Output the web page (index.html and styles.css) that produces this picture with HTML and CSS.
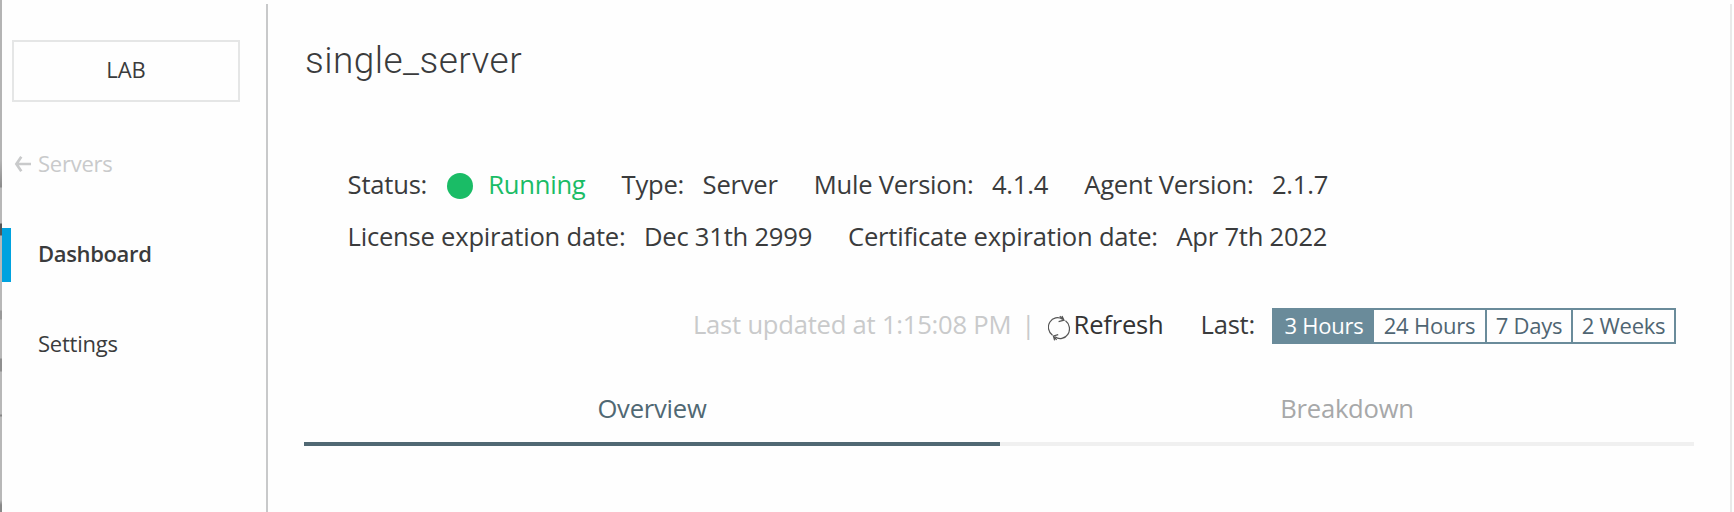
FILE: index.html
```
<!DOCTYPE html>
<html lang="en">
<head>
<meta charset="utf-8">
<title>single_server</title>
<link rel="stylesheet" href="styles.css">
</head>
<body>
<div class="app">
  <div class="edge"></div>
  <aside class="sidebar">
    <div class="env">LAB</div>
    <a class="back">
      <svg class="arrow" width="17" height="16" viewBox="0 0 17 16"><path d="M7.3 0.8 L2.4 8 L7.3 15.2 M2.4 8 H17" fill="none" stroke="#c9cacb" stroke-width="2.7"/></svg>
      <span>Servers</span>
    </a>
    <nav class="nav">
      <a class="nav-item active">Dashboard</a>
      <a class="nav-item">Settings</a>
    </nav>
  </aside>
  <main class="main">
    <h1 class="title">single_server</h1>
    <section class="details">
      <div class="row">
        <div class="field"><span>Status:</span><span class="status"><i class="dot"></i><span>Running</span></span></div>
        <div class="field"><span>Type:</span><span>Server</span></div>
        <div class="field"><span>Mule Version:</span><span>4.1.4</span></div>
        <div class="field"><span>Agent Version:</span><span>2.1.7</span></div>
      </div>
      <div class="row">
        <div class="field"><span>License expiration date:</span><span>Dec 31th 2999</span></div>
        <div class="field"><span>Certificate expiration date:</span><span>Apr 7th 2022</span></div>
      </div>
    </section>
    <section class="toolbar">
      <span class="updated">Last updated at 1:15:08 PM</span>
      <span class="bar">|</span>
      <a class="refresh">
        <svg class="cycle" width="22" height="26" viewBox="0 0 22 26" fill="none" stroke="#555" stroke-width="1.2"><path d="M4.5 20.3 A9 9.5 0 0 1 14.5 4.3 M17.5 5.8 A9 9.5 0 0 1 7 21.8"/><path d="M11.8 1.2 L16 5.2 L10.6 6.6 M16 5.2 L14 1 M10.2 19.6 L5.4 21 L8.6 24.8 M5.4 21 L6.6 25.4"/></svg>
        <span>Refresh</span>
      </a>
      <span class="last">Last:</span>
      <div class="segments">
        <span class="seg selected">3 Hours</span>
        <span class="seg">24 Hours</span>
        <span class="seg">7 Days</span>
        <span class="seg">2 Weeks</span>
      </div>
    </section>
    <div class="tabs">
      <a class="tab current">Overview</a>
      <a class="tab">Breakdown</a>
    </div>
  </main>
</div>
</body>
</html>
```
FILE: styles.css
```
* { box-sizing: border-box; }
body {
  margin: 0;
  background: #fefefe;
  color: #3a3b3c;
  font-family: "Open Sans", "Noto Sans", sans-serif;
  font-size: 25.6px;
  letter-spacing: -0.23px;
  overflow: hidden;
}
.app { display: flex; height: 512px; width: 1734px; }
.edge {
  width: 2px;
  background: linear-gradient(#b4b4b4 0 160px, #8c8c8c 187px, #b8b8b8 188px 223px, #555 224px 235px, #b8b8b8 236px 310px, #999 311px 319px, #b8b8b8 320px 358px, #8f8f8f 359px 371px, #b8b8b8 372px 414px, #888 415px 416px, #b8b8b8 417px 500px, #888 505px);
}
.sidebar { width: 264px; padding-top: 40px; font-size: 22px; }
.env {
  width: 228px;
  height: 62px;
  margin-left: 10px;
  border: 2px solid #e5e6e6;
  line-height: 55px;
  text-align: center;
  letter-spacing: 0;
}
.back {
  display: flex;
  align-items: center;
  gap: 7px;
  height: 30px;
  margin: 47px 0 0 12px;
  line-height: 28px;
  color: #c9cacb;
}
.back span { height: 30px; }
.nav { padding-top: 49px; }
.nav-item {
  display: block;
  height: 54px;
  line-height: 51px;
  padding-left: 36px;
  margin-bottom: 36px;
}
.nav-item.active {
  padding-left: 27px;
  border-left: 9px solid #00a2df;
  font-weight: 600;
  letter-spacing: -0.35px;
}
.main {
  box-sizing: content-box;
  width: 1390px;
  margin-top: 4px;
  padding: 27px 36px 0 36px;
  border-left: 2px solid #c8c9ca;
  border-right: 2px solid #e9e9e9;
}
.title {
  margin: 0;
  height: 60px;
  padding-left: 1px;
  line-height: 60px;
  font-family: Roboto, sans-serif;
  font-weight: 300;
  font-size: 37px;
  letter-spacing: 0.45px;
}
.details { padding: 69px 0 0 43.6px; }
.row { display: flex; gap: 36px; height: 52px; line-height: 50px; white-space: nowrap; }
.field { display: flex; gap: 18.5px; }
.status { display: flex; align-items: center; gap: 15.6px; padding-left: 1px; color: #1abc66; }
.status span { height: 52px; }
.dot { width: 26px; height: 26px; border-radius: 50%; background: #1abc66; }
.toolbar {
  display: flex;
  justify-content: flex-end;
  height: 36px;
  line-height: 33px;
  margin-top: 44px;
  padding-right: 18px;
  white-space: nowrap;
}
.updated, .bar { color: #c9cacb; }
.bar { margin: 0 13px 0 10px; }
.refresh { display: flex; gap: 3.5px; color: #333; }
.cycle { margin-top: 7px; }
.last { margin: 0 17px 0 37px; }
.segments {
  display: grid;
  grid-template-columns: 98px 113px 86px 103px;
  height: 36px;
  border: 2px solid #6a8b9a;
  font-size: 22px;
  color: #4f6572;
}
.seg { line-height: 31px; border-left: 2px solid #6a8b9a; text-align: center; }
.seg.selected { background: #6a8b9a; color: #fff; }
.tabs { display: flex; margin-top: 38px; }
.tab { width: 694px; height: 64px; line-height: 54px; text-align: center; border-bottom: 4px solid #f0f0f0; color: #a7a8a9; }
.tab.current { width: 696px; border-color: #506873; color: #506873; }
```
